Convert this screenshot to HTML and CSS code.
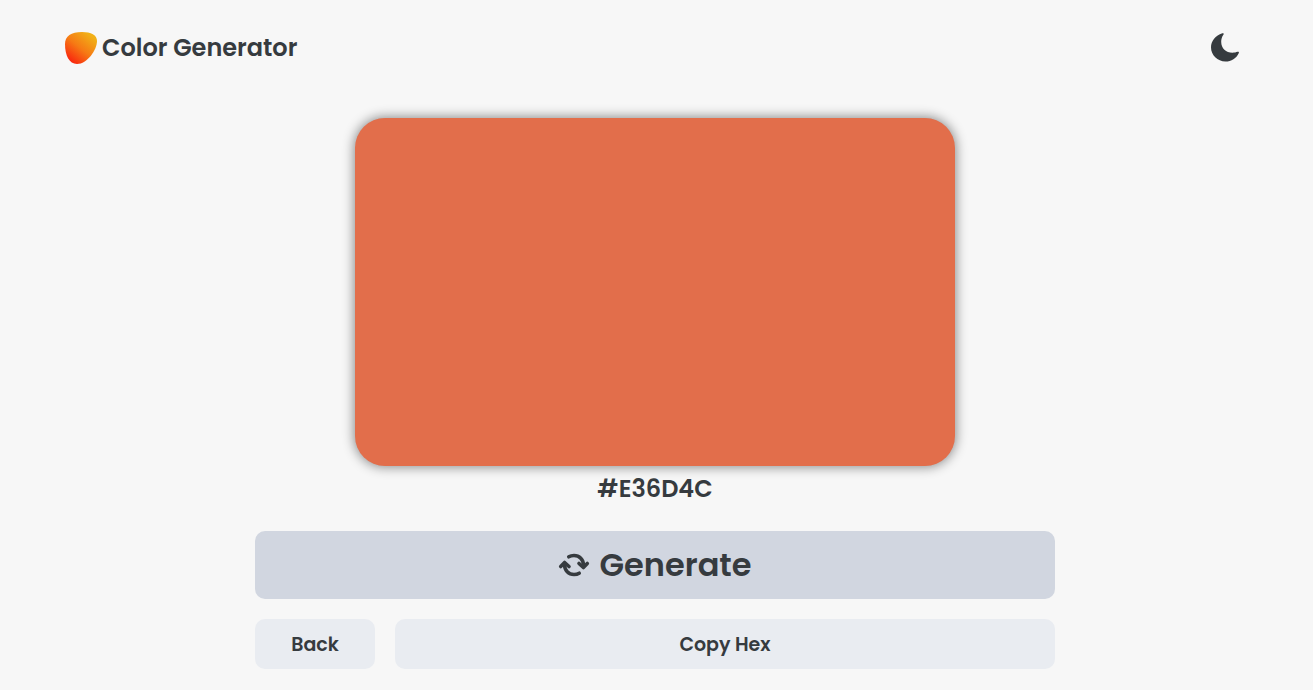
FILE: index.html
```html
<!DOCTYPE html>
<html lang="en">
<head>
<meta charset="utf-8">
<meta name="viewport" content="width=device-width, initial-scale=1">
<title>Color Generator</title>
<link rel="stylesheet" href="styles.css">
</head>
<body>
<header class="header">
  <a class="brand" href="#">
    <svg class="brand-logo" viewBox="0 0 32 32" aria-hidden="true">
      <defs>
        <linearGradient id="logo-fill" x1="0.15" y1="0.9" x2="0.8" y2="0.1">
          <stop offset="0" stop-color="#f9260f"/>
          <stop offset="0.5" stop-color="#f67a14"/>
          <stop offset="1" stop-color="#f1b017"/>
        </linearGradient>
      </defs>
      <path fill="url(#logo-fill)" d="M0 12C0 4 6 0 17 0C26 0 32 3 32 9C32 18 22 32 12 32C4 32 0 23 0 12Z"/>
    </svg>
    <span>Color Generator</span>
  </a>
  <button class="theme-toggle" type="button" aria-label="Toggle dark mode">
    <svg class="theme-icon" viewBox="0 0 32 32" aria-hidden="true">
      <path fill="currentColor" d="M16.500 30.500C8.500 30.500 2 24.200 2 16.300C2 10 6.500 4.200 13.300 2.200C14.400 1.900 15.200 2.600 14.500 3.600C12.800 6 12.200 8.500 12.200 10.800C12.200 17.500 17 21.700 23.500 21.700C25.600 21.700 27 21.300 28.500 20.800C29.700 20.400 30.300 21.100 29.700 22.200C27.400 27.300 22.400 30.500 16.500 30.500Z"/>
    </svg>
  </button>
</header>
<main class="generator">
  <div class="swatch"></div>
  <h1 class="hex">#E36D4C</h1>
  <div class="actions">
    <button class="button generate" type="button">
      <svg class="generate-icon" viewBox="0 0 32 32" fill="none" stroke="currentColor" stroke-width="3.600" stroke-linecap="round" stroke-linejoin="round" aria-hidden="true">
        <path d="M10.800 7.800C12.300 6.900 14.100 6.500 16 6.500C21.500 6.500 25.400 10.600 25.400 16V17.500"/>
        <path d="M21.200 24.200C19.700 25.100 17.900 25.500 16 25.500C10.500 25.500 6.600 21.400 6.600 16V14.500"/>
        <path d="M21 14.500L25.400 18.500L29.300 14.500M11 17.500L6.600 13.500L2.700 17.500"/>
      </svg>
      <span>Generate</span>
    </button>
    <button class="button" type="button">Back</button>
    <button class="button" type="button">Copy Hex</button>
  </div>
</main>
</body>
</html>
```
FILE: styles.css
```css
* {
  box-sizing: border-box;
}

body {
  margin: 0;
  background: #f7f7f7;
  color: #363b3f;
  font-family: Poppins, Inter, "Open Sans", sans-serif;
  font-weight: 600;
}

.header {
  display: flex;
  align-items: center;
  justify-content: space-between;
  height: 96px;
  padding: 0 72px 0 65px;
}

.brand {
  display: flex;
  align-items: center;
  gap: 5px;
  color: inherit;
  font-size: 24px;
  line-height: 36px;
  text-decoration: none;
}

.brand-logo {
  width: 32px;
  height: 32px;
}

.theme-toggle {
  display: flex;
  padding: 0 0 2px;
  border: 0;
  background: none;
  color: #363b3f;
  cursor: pointer;
}

.theme-icon {
  width: 32px;
  height: 32px;
}

.generator {
  display: flex;
  flex-direction: column;
  align-items: center;
  padding: 22px 3px 20px 0;
}

.swatch {
  width: 100%;
  max-width: 600px;
  height: 348px;
  border-radius: 30px;
  background: #e26e4b;
  box-shadow: 0 0 12px 1px rgba(0, 0, 0, 0.45);
}

.hex {
  margin: 5px 0 24px;
  font-size: 24px;
  font-weight: 600;
  line-height: 36px;
}

.actions {
  display: grid;
  grid-template-columns: 120px 1fr;
  gap: 20px;
  width: 100%;
  max-width: 800px;
}

.button {
  height: 50px;
  padding: 0;
  border: 0;
  border-radius: 10px;
  background: #e9ecf1;
  color: inherit;
  font: inherit;
  font-size: 19px;
  cursor: pointer;
}

.generate {
  display: flex;
  grid-column: 1 / -1;
  align-items: center;
  justify-content: center;
  gap: 9px;
  height: 68px;
  background: #d1d6e0;
  font-size: 32px;
}

.generate-icon {
  width: 32px;
  height: 32px;
}
```
